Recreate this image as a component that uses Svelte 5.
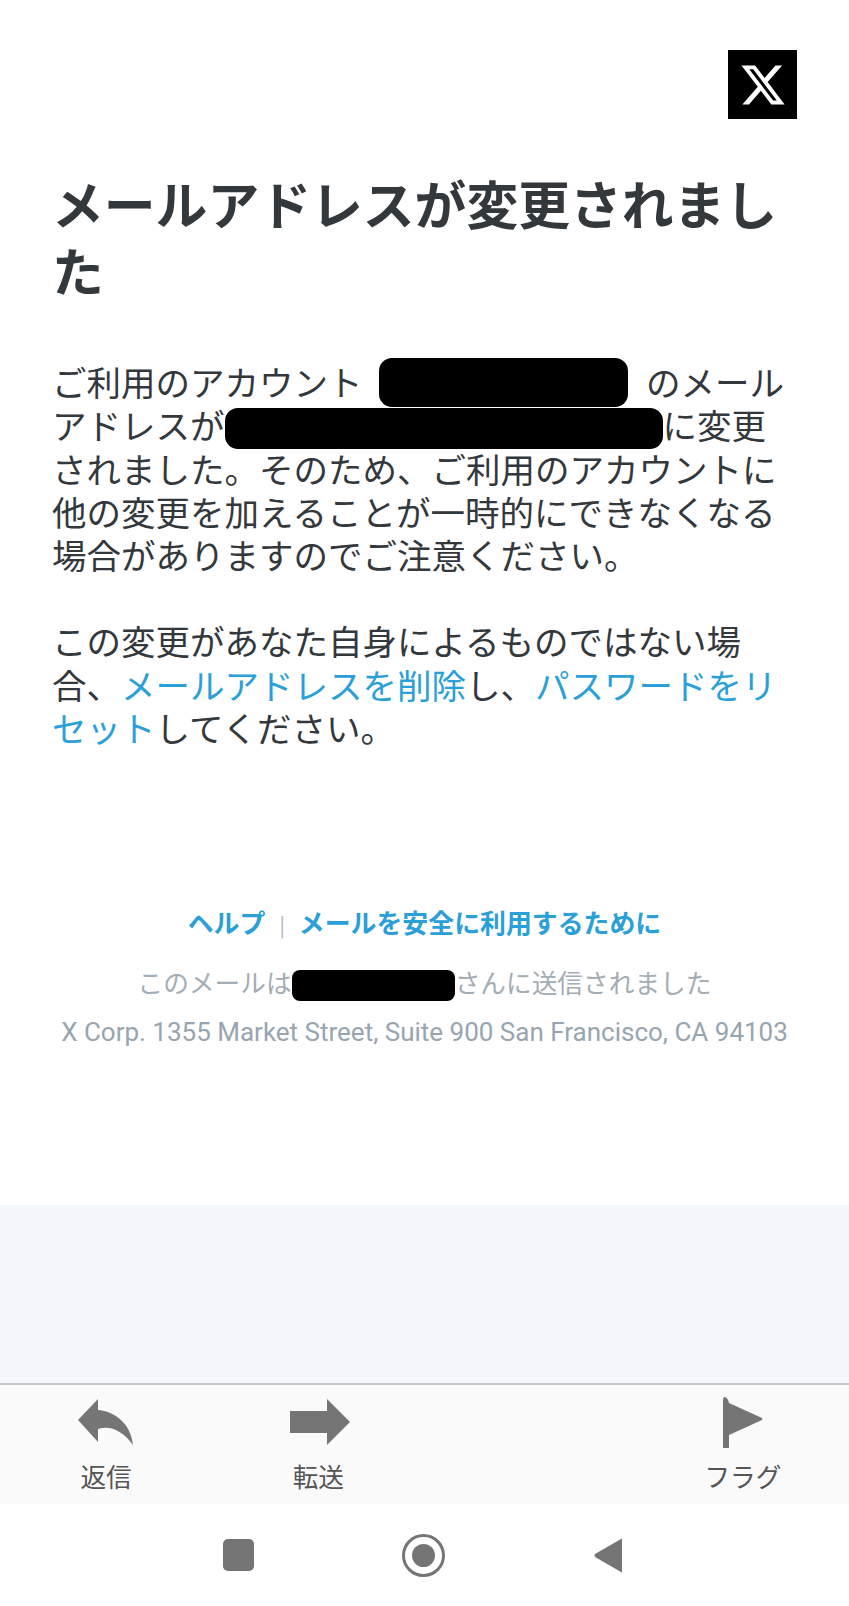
<script>
  const actions = [
    { label: "返信", icon: "reply" },
    { label: "転送", icon: "forward" },
    null,
    { label: "フラグ", icon: "flag" },
  ];
</script>

<div class="page">
  <main class="mail">
    <div class="logo-row">
      <div class="logo">
        <svg viewBox="0 0 24 24" width="48" height="48" aria-hidden="true">
          <path
            fill="#fff"
            d="M18.24 2.25h3.31l-7.23 8.26 8.5 11.24h-6.66l-5.21-6.82-5.97 6.82H1.68l7.73-8.84L1.25 2.25h6.83l4.71 6.23zm-1.16 17.52h1.83L7.08 4.13H5.12z"
          />
        </svg>
      </div>
    </div>

    <h1>メールアドレスが変更されました</h1>

    <p class="body first">
      ご利用のアカウント <span class="mask mask-account"></span> のメール<wbr />アドレスが<span class="mask mask-email"></span>に変更されました。そのため、ご利用のアカウントに他の変更を加えることが一時的にできなくなる場合がありますのでご注意ください。
    </p>
    <p class="body second">
      この変更があなた自身によるものではない場合、<a href="#delete">メールアドレスを削除</a>し、<a href="#reset">パスワードをリセット</a>してください。
    </p>

    <footer class="foot">
      <div class="foot-links">
        <a href="#help">ヘルプ</a><span class="sep">|</span><a href="#safety">メールを安全に利用するために</a>
      </div>
      <div class="foot-note">このメールは<span class="mask mask-name"></span>さんに送信されました</div>
      <div class="foot-address">X Corp. 1355 Market Street, Suite 900 San Francisco, CA 94103</div>
    </footer>
  </main>

  <div class="band"></div>

  <nav class="toolbar">
    {#each actions as action}
      {#if action}
        <button class="action">
          <span class="action-icon">
            {#if action.icon === "reply"}
              <svg viewBox="0 -2 56 50" width="56" height="50" aria-hidden="true">
                <path fill="#757575" d="M20 0 L0 21 L20 43 L20 30 C32 26 45 32 55 46 C53 27 40 13 20 11 Z" />
              </svg>
            {:else if action.icon === "forward"}
              <svg viewBox="-3 0 63 46" width="63" height="46" aria-hidden="true">
                <path fill="#757575" d="M0 12 H37 V0 L60 23 L37 46 V34 H0 Z" />
              </svg>
            {:else}
              <svg viewBox="0 0 42 51" width="42" height="51" aria-hidden="true">
                <path fill="#757575" d="M1 3 Q1 0 3 0 Q6 1 7 6 L40 21 Q41 22 40 23 L7 38 V51 H1 Z" />
              </svg>
            {/if}
          </span>
          <span class="action-label">{action.label}</span>
        </button>
      {:else}
        <span></span>
      {/if}
    {/each}
  </nav>

  <div class="system-nav">
    <span class="sys-square"></span>
    <span class="sys-circle"><span></span></span>
    <svg class="sys-back" viewBox="0 0 28 35" width="28" height="35" aria-hidden="true">
      <path fill="#757575" d="M28 1 V34 Q28 35 27 34 L1 19 Q0 17.500 1 16 L27 1 Q28 0 28 1 Z" />
    </svg>
  </div>
</div>

<style>
  :global(body) {
    background: #fff;
  }

  .page {
    width: 849px;
    height: 1606px;
    display: flex;
    flex-direction: column;
    overflow: hidden;
    background: #fff;
    font-family: "Noto Sans CJK JP", "Noto Sans", sans-serif;
  }

  .mail {
    height: 1205px;
    box-sizing: border-box;
    padding: 50px 59px 0 52px;
    color: #33383c;
  }

  .logo-row {
    display: flex;
    justify-content: flex-end;
    margin-right: -7px;
  }

  .logo {
    width: 69px;
    height: 69px;
    background: #000;
    display: flex;
    align-items: center;
    justify-content: center;
  }

  h1 {
    margin: 51px 0 0;
    font-size: 51.8px;
    line-height: 66.5px;
    font-weight: 600;
    color: #33383c;
  }

  .body {
    margin: 0;
    font-size: 34.5px;
    line-height: 43.3px;
  }

  .first {
    margin-top: 57px;
  }

  .second {
    margin-top: 43px;
  }

  a {
    color: #2a9fd8;
    text-decoration: none;
  }

  .mask {
    display: inline-block;
    background: #000;
    border-radius: 13px;
    vertical-align: middle;
  }

  .mask-account {
    width: 249px;
    height: 49px;
    margin: -12px 10px -4px 9px;
  }

  .mask-email {
    width: 438px;
    height: 41px;
    margin: -6px 0 -4px;
  }

  .foot {
    margin: 154px -59px 0 -52px;
    text-align: center;
    font-size: 25.7px;
  }

  .foot-links {
    line-height: 38px;
    font-size: 25.9px;
    font-weight: 700;
  }

  .sep {
    margin: 0 14px;
    font-size: 20px;
    font-weight: 400;
    color: #a9b4bc;
  }

  .foot-note {
    margin-top: 19px;
    line-height: 38px;
    color: #a3adb5;
  }

  .mask-name {
    width: 163px;
    height: 31px;
    border-radius: 8px;
    margin: -3px 0 -1px;
  }

  .foot-address {
    margin-top: 12px;
    line-height: 38px;
    font-size: 26px;
    color: #97a5b0;
    font-family: Roboto, "Noto Sans", sans-serif;
    white-space: nowrap;
  }

  .band {
    height: 178px;
    background: #f4f7fc;
  }

  .toolbar {
    height: 121px;
    box-sizing: border-box;
    display: grid;
    grid-template-columns: repeat(4, 1fr);
    background: #fafafa;
    border-top: 2px solid #c9c9cd;
  }

  .action {
    padding: 11px 0 0;
    border: 0;
    background: none;
    display: flex;
    flex-direction: column;
    align-items: center;
    font: inherit;
    color: #555;
  }

  .action-icon {
    height: 52px;
    display: flex;
    align-items: center;
    justify-content: center;
  }

  .action-label {
    margin-top: 12px;
    font-size: 25.6px;
    line-height: 32px;
  }

  .system-nav {
    flex: 1;
    display: flex;
    align-items: center;
    justify-content: center;
    padding: 0 5px 0 0;
  }

  .sys-square {
    width: 31px;
    height: 32px;
    border-radius: 5px;
    background: #757575;
  }

  .sys-circle {
    width: 43px;
    height: 43px;
    margin: 0 149px 0 148px;
    box-sizing: border-box;
    border: 3px solid #757575;
    border-radius: 50%;
    display: flex;
    align-items: center;
    justify-content: center;
  }

  .sys-circle span {
    width: 23px;
    height: 23px;
    border-radius: 50%;
    background: #757575;
  }

  .sys-back {
    display: block;
  }
</style>
